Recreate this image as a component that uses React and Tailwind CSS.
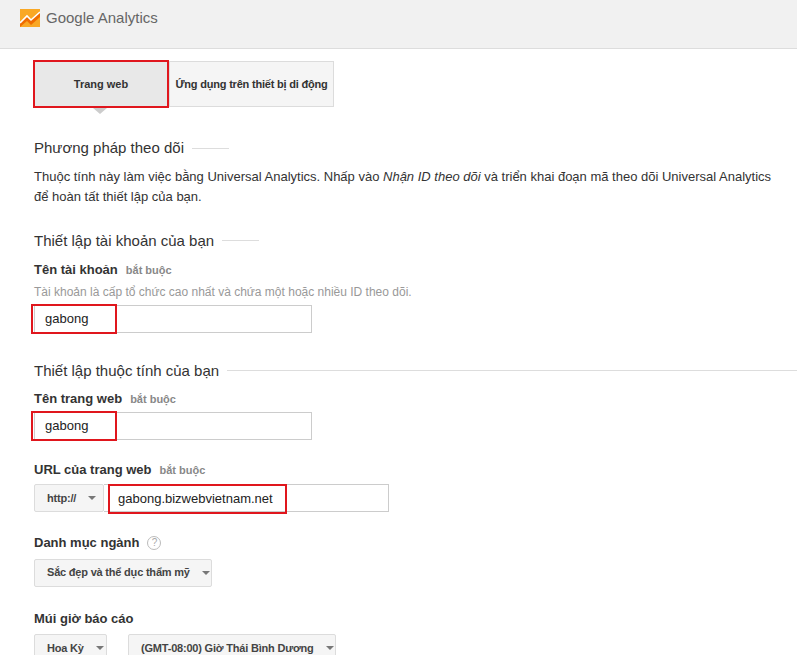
import React from "react";

const Caret = () => (
  <span className="ml-auto inline-block w-0 h-0 border-l-[4px] border-r-[4px] border-t-[4px] border-l-transparent border-r-transparent border-t-[#777]" />
);

const Select = ({ label, className }) => (
  <div className={`h-[28px] flex items-center px-3 gap-3 bg-[#f5f5f5] border border-[#dcdcdc] rounded-[2px] text-[11px] font-bold text-[#444] whitespace-nowrap tracking-[-0.2px] ${className}`}>
    <span>{label}</span>
    <Caret />
  </div>
);

const Heading = ({ children, line }) => (
  <div className="flex items-center gap-2">
    <span className="text-[15px] text-[#333]">{children}</span>
    <div className={`h-px bg-[#ddd] ${line}`} />
  </div>
);

const Label = ({ children, req = true }) => (
  <div className="text-[13px] font-bold text-[#333]">
    {children}
    {req && <span className="ml-2 text-[11px] text-[#888]">bắt buộc</span>}
  </div>
);

const RedInput = ({ value }) => (
  <div className="w-[278px] h-[28px] border border-[#ccc] relative bg-white">
    <div className="absolute left-[-4px] top-[-2px] w-[86px] h-[30px] border-2 border-[#e0161d] flex items-center pl-[12px] text-[13px] text-[#222]">
      {value}
    </div>
  </div>
);

export default function App() {
  return (
    <div className="w-[797px] h-[655px] overflow-hidden bg-white" style={{ fontFamily: '"Liberation Sans", Arial, sans-serif' }}>
      <div className="h-[49px] bg-[#f1f1f1] border-b border-[#ddd] flex items-start pl-[20px] pt-[9px] gap-[6px]">
        <svg width="20" height="18" viewBox="0 0 20 18">
          <rect width="20" height="18" fill="#f9a825" />
          <path d="M0 14 L7 7 L11 11 L20 3 L20 8 L11 16 L7 12 L0 18 Z" fill="#ef6c00" />
          <path d="M0 14 L7 7 L11 11 L20 3" stroke="#fff" strokeWidth="1.6" fill="none" />
        </svg>
        <span className="text-[15px] text-[#666] leading-[18px]">Google Analytics</span>
      </div>

      <div className="pl-[34px]">
        <div className="flex mt-[11px] ml-[-1px] relative">
          <div className="w-[136px] h-[48px] border-2 border-[#e0161d] bg-[#e8e8e8] flex items-center justify-center text-[11px] font-bold text-[#333]">
            Trang web
          </div>
          <div className="w-[165px] h-[46px] mt-px border border-[#dcdcdc] bg-[#f5f5f5] flex items-center justify-center text-[11px] font-bold text-[#333] tracking-[-0.2px]">
            Ứng dụng trên thiết bị di động
          </div>
          <div className="absolute left-[60px] top-[48px] w-0 h-0 border-l-[7px] border-r-[7px] border-t-[6px] border-l-transparent border-r-transparent border-t-[#ccc]" />
        </div>

        <div className="mt-[29px]"><Heading line="w-[37px]">Phương pháp theo dõi</Heading></div>
        <p className="mt-[7px] text-[13px] leading-[20px] text-[#333] pr-[16px]">
          Thuộc tính này làm việc bằng Universal Analytics. Nhấp vào <i>Nhận ID theo dõi</i> và triển khai đoạn mã theo dõi Universal Analytics để hoàn tất thiết lập của bạn.
        </p>

        <div className="mt-[23px]"><Heading line="w-[37px]">Thiết lập tài khoản của bạn</Heading></div>
        <div className="mt-[8px]"><Label>Tên tài khoản</Label></div>
        <div className="text-[12px] text-[#999] mt-[3px]">Tài khoản là cấp tổ chức cao nhất và chứa một hoặc nhiều ID theo dõi.</div>
        <div className="mt-[4px]"><RedInput value="gabong" /></div>

        <div className="mt-[27px]"><Heading line="flex-1">Thiết lập thuộc tính của bạn</Heading></div>
        <div className="mt-[7px]"><Label>Tên trang web</Label></div>
        <div className="mt-[3px]"><RedInput value="gabong" /></div>

        <div className="mt-[20px]"><Label>URL của trang web</Label></div>
        <div className="mt-[5px] flex">
          <Select label="http://" className="w-[70px]" />
          <div className="w-[285px] h-[28px] border border-[#ccc] border-l-0 relative">
            <div className="absolute left-[4px] top-[-1px] w-[179px] h-[30px] border-2 border-[#e0161d] flex items-center pl-[8px] text-[13px] text-[#222]">
              gabong.bizwebvietnam.net
            </div>
          </div>
        </div>

        <div className="mt-[21px] flex items-center gap-2">
          <Label req={false}>Danh mục ngành</Label>
          <span className="w-[14px] h-[14px] rounded-full border border-[#bbb] text-[10px] text-[#aaa] flex items-center justify-center">?</span>
        </div>
        <div className="mt-[6px]"><Select label="Sắc đẹp và thể dục thẩm mỹ" className="w-[178px]" /></div>

        <div className="mt-[22px]"><Label req={false}>Múi giờ báo cáo</Label></div>
        <div className="mt-[6px] flex gap-[21px]">
          <Select label="Hoa Kỳ" className="w-[73px]" />
          <Select label="(GMT-08:00) Giờ Thái Bình Dương" className="w-[208px]" />
        </div>
      </div>
    </div>
  );
}
